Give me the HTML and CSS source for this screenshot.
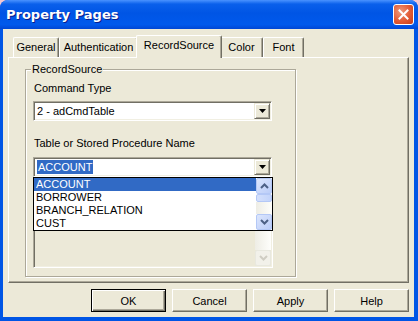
FILE: index.html
```html
<!DOCTYPE html>
<html lang="en">
<head>
  <meta charset="UTF-8">
  <title>Property Pages</title>
  <link rel="stylesheet" href="styles.css">
</head>
<body>

  <div class="window">
    <div class="titlebar">
      <span class="title">Property Pages</span>
      <button class="close-btn" aria-label="Close">
        <svg width="11" height="11" viewBox="0 0 11 11"><path d="M1.5 1.5 L9.5 9.5 M9.5 1.5 L1.5 9.5" stroke="#fff" stroke-width="2" stroke-linecap="square"/></svg>
      </button>
    </div>

    <div class="client">
      <div class="tabs">
        <div class="tab tab-general">General</div>
        <div class="tab tab-auth">Authentication</div>
        <div class="tab tab-source active">RecordSource</div>
        <div class="tab tab-color">Color</div>
        <div class="tab tab-font">Font</div>
      </div>

      <div class="panel">
        <fieldset class="group">
          <legend>RecordSource</legend>

          <div class="label first">Command Type</div>
          <div class="combo">
            <div class="combo-text">2 - adCmdTable</div>
            <div class="combo-btn">
              <svg width="7" height="4" viewBox="0 0 7 4"><polygon points="0,0 7,0 3.5,4" fill="#000"/></svg>
            </div>
          </div>

          <div class="label second">Table or Stored Procedure Name</div>
          <div class="combo-wrap">
            <div class="combo">
              <div class="combo-text"><span class="sel">ACCOUNT</span></div>
              <div class="combo-btn">
                <svg width="7" height="4" viewBox="0 0 7 4"><polygon points="0,0 7,0 3.5,4" fill="#000"/></svg>
              </div>
            </div>

            <!-- list underneath the open dropdown -->
            <div class="listbox">
              <div class="listbox-body"></div>
              <div class="scroll">
                <div class="track"></div>
                <div class="sbtn disabled">
                  <svg width="9" height="6" viewBox="0 0 9 6"><path d="M1 1 L4.5 4.5 L8 1" fill="none" stroke="#CFCDC3" stroke-width="2"/></svg>
                </div>
              </div>
            </div>

            <!-- open dropdown -->
            <div class="dropdown">
              <ul class="items">
                <li class="hl">ACCOUNT</li>
                <li>BORROWER</li>
                <li>BRANCH_RELATION</li>
                <li>CUST</li>
              </ul>
              <div class="scroll">
                <div class="sbtn">
                  <svg width="9" height="6" viewBox="0 0 9 6"><path d="M1 5 L4.5 1.5 L8 5" fill="none" stroke="#4D6185" stroke-width="2"/></svg>
                </div>
                <div class="thumb"></div>
                <div class="track"></div>
                <div class="sbtn">
                  <svg width="9" height="6" viewBox="0 0 9 6"><path d="M1 1 L4.5 4.5 L8 1" fill="none" stroke="#4D6185" stroke-width="2"/></svg>
                </div>
              </div>
            </div>
          </div>
        </fieldset>
      </div>

      <div class="buttons">
        <button class="btn default">OK</button>
        <button class="btn">Cancel</button>
        <button class="btn">Apply</button>
        <button class="btn">Help</button>
      </div>
    </div>
  </div>

</body>
</html>
```

FILE: styles.css
```css
/* Window */
body {
  margin: 0;
  background: #F2C8D2;
  font-family: 'Liberation Sans', Arial, sans-serif;
  font-size: 11px;
  color: #000;
}

.window {
  width: 418px;
  height: 321px;
  display: flex;
  flex-direction: column;
  background: #0055E5;
  border-radius: 8px 8px 0 0;
  overflow: hidden;
}

.titlebar {
  height: 29px;
  flex: none;
  display: flex;
  align-items: center;
  justify-content: space-between;
  padding: 0 4px 0 6px;
  background: linear-gradient(#4A93FF 0%, #0A60EB 14%, #0055E5 45%, #0059EC 85%, #0046D4 100%);
}

.title {
  color: #fff;
  font-family: 'DejaVu Sans', sans-serif;
  font-weight: bold;
  font-size: 13px;
  text-shadow: 1px 1px #0A1E8C;
}

.close-btn {
  width: 21px;
  height: 21px;
  padding: 0;
  border: 1px solid #fff;
  border-radius: 3px;
  background: radial-gradient(circle at 35% 35%, #EE9A7C, #E25A34 55%, #C43C18);
  display: flex;
  align-items: center;
  justify-content: center;
}

.client {
  flex: 1;
  margin: 0 4px 4px 3px;
  background: #ECE9D8;
  display: flex;
  flex-direction: column;
}

/* Tabs */
.tabs {
  height: 28px;
  display: flex;
  align-items: flex-end;
  padding-left: 10px;
}

.tab {
  height: 20px;
  box-sizing: border-box;
  text-align: center;
  line-height: 19px;
  border-top: 1px solid #fff;
  border-left: 1px solid #fff;
  border-right: 1px solid #716F64;
  box-shadow: inset -1px 0 #ACA899;
  border-radius: 2px 2px 0 0;
  background: #ECE9D8;
}

.tab-general { width: 46px; }
.tab-auth { width: 79px; }
.tab-source { width: 82px; }
.tab-color { width: 43px; }
.tab-font { width: 41px; }

.tab.active {
  width: 86px;
  height: 23px;
  margin: 0 -2px -1px;
  padding-bottom: 3px;
  position: relative;
  z-index: 1;
}

/* Panel */
.panel {
  margin-left: 5px;
  width: 401px;
  height: 226px;
  box-sizing: border-box;
  border-top: 1px solid #fff;
  border-left: 1px solid #fff;
  border-right: 1px solid #716F64;
  border-bottom: 1px solid #716F64;
  box-shadow: inset -1px -1px #ACA899;
}

.group {
  margin: 5px 0 0 16px;
  width: 271px;
  height: 214px;
  box-sizing: border-box;
  padding: 0 0 0 7px;
  border: 1px solid #ACA899;
  box-shadow: inset 1px 1px #fff, 1px 1px #fff;
}

.group legend {
  margin-left: -2px;
  padding: 0 1px;
  line-height: 13px;
  background: #ECE9D8;
}

.label {
  margin-left: 1px;
  line-height: 13px;
}

.label.first {
  margin-top: 6px;
  margin-bottom: 6px;
}

.label.second {
  margin-top: 16px;
  margin-bottom: 7px;
}

/* Combo boxes */
.combo {
  width: 239px;
  height: 20px;
  box-sizing: border-box;
  display: flex;
  padding: 1px;
  border: 1px solid;
  border-color: #ACA899 #fff #fff #ACA899;
  box-shadow: inset 1px 1px #716F64, inset -1px -1px #F1EFE2;
  background: #fff;
}

.combo-text {
  flex: 1;
  line-height: 16px;
  padding-left: 2px;
}

.sel {
  background: #316AC5;
  color: #fff;
  padding: 1px 1px;
}

.combo-btn {
  width: 16px;
  height: 16px;
  box-sizing: border-box;
  border: 1px solid;
  border-color: #ECE9D8 #716F64 #716F64 #ECE9D8;
  box-shadow: inset 1px 1px #fff, inset -1px -1px #ACA899;
  background: #ECE9D8;
  display: flex;
  align-items: center;
  justify-content: center;
}

.combo-wrap {
  position: relative;
}

/* List below */
.listbox {
  width: 240px;
  height: 91px;
  box-sizing: border-box;
  display: flex;
  padding: 1px;
  border: 1px solid;
  border-color: #ACA899 #fff #fff #ACA899;
  box-shadow: inset 1px 1px #716F64, inset -1px -1px #F1EFE2;
  background: #ECE9D8;
}

.listbox-body {
  flex: 1;
}

.scroll {
  width: 16px;
  display: flex;
  flex-direction: column;
}

.track {
  flex: 1;
  background: linear-gradient(to right, #EEEDE5, #FEFEFB);
}

.sbtn {
  height: 16px;
  box-sizing: border-box;
  border: 1px solid #B4C8F6;
  border-radius: 2px;
  background: linear-gradient(135deg, #DCE6FD, #BBCDF8);
  display: flex;
  align-items: center;
  justify-content: center;
}

.sbtn.disabled {
  border-color: #E8E8DF;
  background: #F2F1EA;
}

.thumb {
  height: 8px;
  box-sizing: border-box;
  border: 1px solid #B4C8F6;
  border-radius: 2px;
  background: linear-gradient(to right, #D4E0FC, #C2D3FA);
}

/* Open dropdown */
.dropdown {
  position: absolute;
  left: 0;
  top: 20px;
  width: 240px;
  height: 54px;
  box-sizing: border-box;
  border: 1px solid #000;
  background: #fff;
  display: flex;
}

.items {
  flex: 1;
  margin: 0;
  padding: 0;
  list-style: none;
}

.items li {
  height: 13px;
  line-height: 13px;
  padding-left: 2px;
}

.items li.hl {
  background: #316AC5;
  color: #fff;
}

/* Buttons */
.buttons {
  display: flex;
  justify-content: flex-end;
  gap: 6px;
  margin-top: 6px;
  padding-right: 5px;
}

.btn {
  width: 75px;
  height: 23px;
  box-sizing: border-box;
  padding: 0;
  font-family: inherit;
  font-size: 11px;
  color: #000;
  background: #ECE9D8;
  border: 1px solid;
  border-color: #fff #716F64 #716F64 #fff;
  box-shadow: inset -1px -1px #ACA899;
}

.btn.default {
  border: 1px solid #000;
  box-shadow: inset 1px 1px #fff, inset -1px -1px #716F64, inset -2px -2px #ACA899;
}
```
